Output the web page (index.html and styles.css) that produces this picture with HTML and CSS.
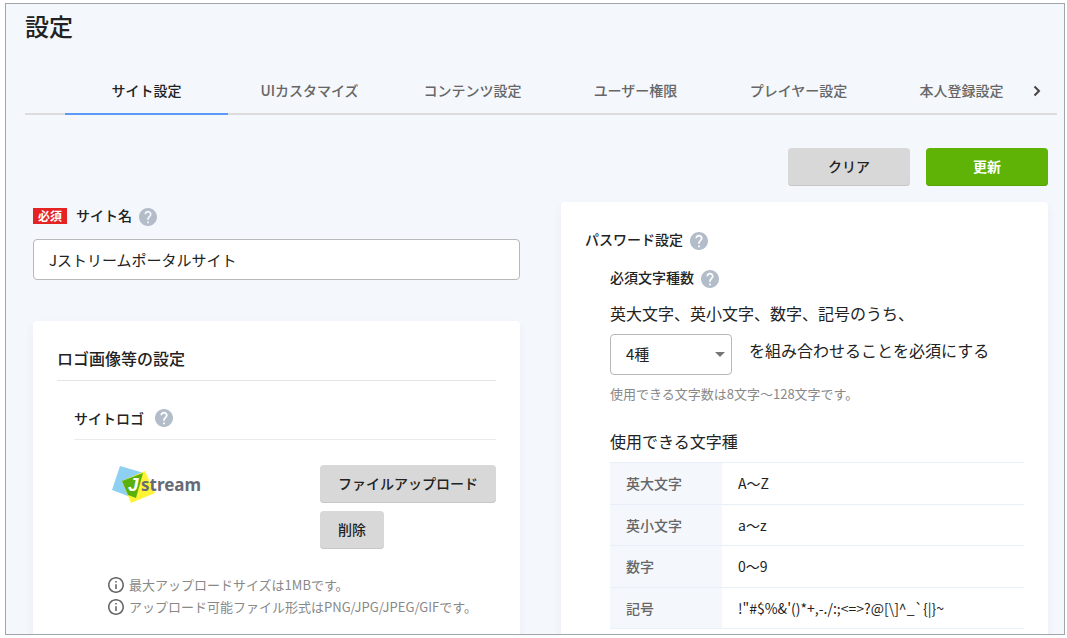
FILE: index.html
```html
<!DOCTYPE html>
<html lang="ja">
<head>
<meta charset="utf-8">
<meta name="viewport" content="width=device-width, initial-scale=1">
<title>設定</title>
<link rel="stylesheet" href="styles.css">
</head>
<body>
<svg class="defs" aria-hidden="true">
  <symbol id="help" viewBox="2 2 20 20"><path d="M12 2C6.48 2 2 6.48 2 12s4.48 10 10 10 10-4.48 10-10S17.52 2 12 2zm1 17h-2v-2h2v2zm2.070-7.750l-.9.920C13.450 12.900 13 13.500 13 15h-2v-.5c0-1.100.450-2.100 1.170-2.830l1.240-1.260c.370-.360.590-.860.590-1.410 0-1.100-.9-2-2-2s-2 .9-2 2H8c0-2.210 1.790-4 4-4s4 1.790 4 4c0 .880-.360 1.680-.930 2.250z"/></symbol>
  <symbol id="info" viewBox="2 2 20 20"><path d="M11 7h2v2h-2zm0 4h2v6h-2zm1-9C6.480 2 2 6.480 2 12s4.480 10 10 10 10-4.480 10-10S17.520 2 12 2zm0 18c-4.410 0-8-3.590-8-8s3.590-8 8-8 8 3.590 8 8-3.590 8-8 8z"/></symbol>
</svg>
<main class="frame">
  <h1 class="title">設定</h1>
  <div class="tabbar">
    <div class="tabs" role="tablist">
      <button class="tab active" role="tab" aria-selected="true">サイト設定</button>
      <button class="tab" role="tab">UIカスタマイズ</button>
      <button class="tab" role="tab">コンテンツ設定</button>
      <button class="tab" role="tab">ユーザー権限</button>
      <button class="tab" role="tab">プレイヤー設定</button>
      <button class="tab" role="tab">本人登録設定</button>
    </div>
    <button class="next" aria-label="次のタブ"><svg class="chevron" viewBox="0 0 10 12"><path d="M2.500 1.500 7 6l-4.500 4.500"/></svg></button>
  </div>
  <div class="content">
    <div class="actions">
      <button class="btn wide">クリア</button>
      <button class="btn wide primary">更新</button>
    </div>
    <div class="columns">
      <section>
        <div class="label-row">
          <span class="required">必須</span>
          <label for="site-name">サイト名</label>
          <svg class="help"><use href="#help"/></svg>
        </div>
        <input class="field" id="site-name" type="text" value="Jストリームポータルサイト">
        <div class="card logo-card">
          <h2 class="card-title">ロゴ画像等の設定</h2>
          <div class="logo-section">
            <h3 class="logo-title">サイトロゴ <svg class="help"><use href="#help"/></svg></h3>
            <div class="logo-row">
              <svg class="logo" viewBox="0 0 96 42" role="img" aria-label="Jstream">
                <path fill="#8dd0f2" d="M8 1 32 8 24 34 0 25z"/>
                <path fill="#fff335" d="M33 6 43 28 19 38 10 16z"/>
                <path fill="#5bb10c" d="M31 8 24 33 16 30 10 16z"/>
                <text class="logo-j" x="16" y="26">J</text>
                <text class="logo-word" x="29" y="26">stream</text>
              </svg>
              <div class="logo-buttons">
                <button class="btn">ファイルアップロード</button>
                <button class="btn">削除</button>
              </div>
            </div>
            <ul class="notes">
              <li><svg class="info"><use href="#info"/></svg>最大アップロードサイズは1MBです。</li>
              <li><svg class="info"><use href="#info"/></svg>アップロード可能ファイル形式はPNG/JPG/JPEG/GIFです。</li>
            </ul>
          </div>
        </div>
      </section>
      <section class="card password-card">
        <h2 class="label-row">パスワード設定 <svg class="help"><use href="#help"/></svg></h2>
        <div class="password-body">
          <div class="label-row"><label for="kinds">必須文字種数</label><svg class="help"><use href="#help"/></svg></div>
          <p class="rule">英大文字、英小文字、数字、記号のうち、</p>
          <div class="select-row">
            <div class="select-box">
              <select class="field" id="kinds"><option>4種</option></select>
              <svg class="caret" viewBox="0 0 10 5"><path d="M0 0h10L5 5z"/></svg>
            </div>
            <span>を組み合わせることを必須にする</span>
          </div>
          <p class="hint">使用できる文字数は8文字～128文字です。</p>
          <h3 class="table-title">使用できる文字種</h3>
          <table class="kinds">
            <tr><th scope="row">英大文字</th><td>A～Z</td></tr>
            <tr><th scope="row">英小文字</th><td>a～z</td></tr>
            <tr><th scope="row">数字</th><td>0～9</td></tr>
            <tr><th scope="row">記号</th><td>!"#$%&amp;'()*+,-./:;&lt;=&gt;?@[\]^_`{|}~</td></tr>
          </table>
        </div>
      </section>
    </div>
  </div>
</main>
</body>
</html>
```

FILE: styles.css
```css
* { box-sizing: border-box; }
body {
  margin: 0;
  padding: 3px 2px 3px 5px;
  height: 100vh;
  background: #fff;
  color: #222;
  font-family: "Noto Sans CJK JP", sans-serif;
  font-size: 14px;
}
h1, h2, h3, p, ul { margin: 0; padding: 0; }
button, input, select { font: inherit; color: inherit; }
button { cursor: pointer; }
.defs { display: none; }

.frame {
  height: 100%;
  overflow: hidden;
  border: 1px solid #a3a5aa;
  background: #f4f7fc;
  padding: 4px 7px 0 19px;
}
.title { font-size: 24px; line-height: 36px; font-weight: 500; }

.tabbar {
  display: grid;
  grid-template-columns: minmax(0, 1fr) 40px;
  margin-top: 23px;
  padding-left: 40px;
  height: 48px;
  box-shadow: inset 0 -2px #dcdcdc;
}
.tabs { display: flex; overflow: hidden; }
.tab {
  flex: 0 0 163px;
  border: 0;
  border-bottom: 2px solid transparent;
  padding: 0;
  background: none;
  color: #666;
  font-weight: 500;
}
.tab.active { color: #222; border-color: #5b98f7; }
.next { border: 0; padding: 0; background: none; display: grid; place-items: center; }
.chevron { width: 10px; height: 12px; fill: none; stroke: #444; stroke-width: 2; }

.content { padding: 33px 9px 0 8px; }
.actions { display: flex; justify-content: flex-end; gap: 16px; margin-bottom: 16px; }
.btn {
  height: 38px;
  padding: 0 18px 2px;
  border: 0;
  border-radius: 4px;
  background: #d8d8d8;
  box-shadow: inset 0 -1px #c6c6c6;
  font-weight: 500;
}
.btn.wide { width: 122px; }
.btn.primary { background: #5fb206; box-shadow: inset 0 -1px #56a503; color: #fff; font-weight: 700; }

.columns { display: grid; grid-template-columns: minmax(0, 1fr) minmax(0, 1fr); gap: 41px; }
.label-row {
  display: flex;
  align-items: center;
  gap: 7px;
  padding-bottom: 2px;
  font-size: 14px;
  line-height: 26px;
  font-weight: 500;
}
.help { width: 18px; height: 18px; fill: #b3bcc9; }
.label-row .help { margin-top: 3px; }
.required {
  margin: 2px 2px 0 0;
  padding: 0 5px;
  background: #e52323;
  color: #fff;
  font-size: 12px;
  line-height: 16px;
  font-weight: 700;
}
.field {
  display: block;
  width: 100%;
  height: 41px;
  padding: 0 15px;
  border: 1px solid #b8b8b8;
  border-radius: 4px;
  background: #fff;
  font-size: 15px;
}
#site-name { margin-top: 9px; }
.card { background: #fff; border-radius: 4px; padding: 24px; box-shadow: 0 4px 10px rgba(60, 90, 140, 0.06); }
.logo-card { margin-top: 41px; padding-bottom: 48px; }
.card-title {
  padding-bottom: 9px;
  border-bottom: 1px solid #e4e4e4;
  font-size: 16px;
  line-height: 26px;
  font-weight: 500;
}
.logo-section { margin: 26px 0 0 17px; }
.logo-title {
  display: flex;
  align-items: center;
  gap: 11px;
  padding-bottom: 10px;
  border-bottom: 1px solid #ebebeb;
  font-size: 14px;
  line-height: 22px;
  font-weight: 500;
}
.logo-row { display: flex; justify-content: space-between; align-items: flex-start; padding: 25px 0 0 38px; }
.logo { width: 96px; height: 42px; }
.logo-j { font: italic 700 19px "Liberation Sans", sans-serif; fill: #fff; }
.logo-word { font: 700 17px "Noto Sans", sans-serif; fill: #666a78; }
.logo-buttons { display: flex; flex-direction: column; align-items: flex-start; gap: 8px; }
.notes { list-style: none; margin: 25px 0 0 34px; color: #888; font-size: 13px; line-height: 22px; }
.notes li { display: flex; align-items: center; gap: 5px; white-space: nowrap; }
.info { width: 16px; height: 16px; fill: #666; }

.password-body { margin: 10px 0 0 25px; }
.rule { margin-top: 8px; font-size: 16px; line-height: 26px; }
.select-row { display: flex; gap: 17px; margin-top: 8px; font-size: 16px; line-height: 32px; white-space: nowrap; }
.select-box { position: relative; width: 122px; }
.select-box .field { appearance: none; padding-bottom: 2px; }
.caret { position: absolute; right: 7px; top: 18px; width: 10px; height: 5px; fill: #777; pointer-events: none; }
.hint { margin-top: 8px; color: #888; font-size: 13px; line-height: 22px; }
.table-title { margin: 23px 0 8px; font-size: 16px; line-height: 26px; font-weight: 400; }
.kinds { width: 100%; height: 167px; border-collapse: collapse; }
.kinds th, .kinds td {
  padding: 0 16px;
  border: solid #e8eff9;
  border-width: 1px 0;
  text-align: left;
  font-weight: 400;
  line-height: 20px;
}
.kinds th { width: 112px; background: #f4f7fc; color: #666; font-weight: 500; }
```
